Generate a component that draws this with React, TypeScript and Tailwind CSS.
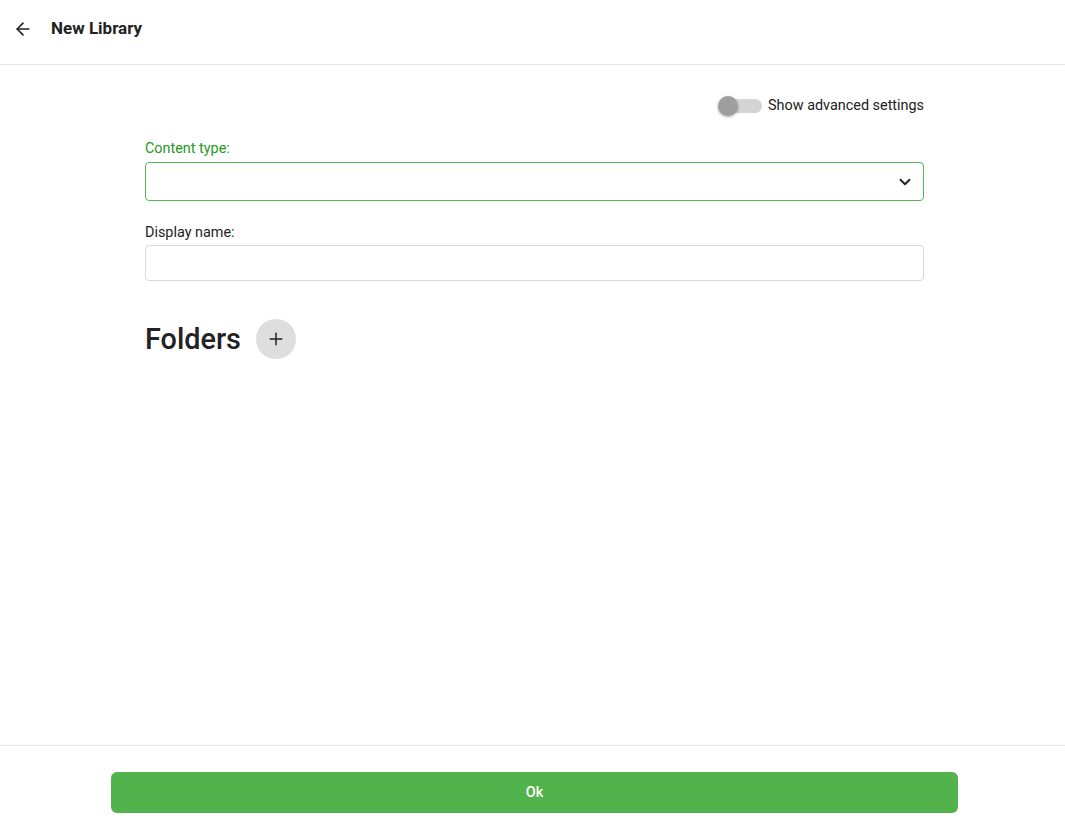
import { ChevronDown, ArrowLeft, Plus } from "lucide-react"

export default function App() {
  return (
    <div className="flex h-[833px] w-full flex-col bg-white text-[#222] font-['Roboto',sans-serif]">
      <header className="flex h-[65px] shrink-0 items-center border-b border-[#e6e6e6] pb-[7px] pl-[13px]">
        <ArrowLeft size={20} strokeWidth={2} className="text-[#222]" />
        <h1 className="ml-[18px] text-[17px] font-bold text-[#222]">New Library</h1>
      </header>

      <main className="flex-1">
        <div className="ml-[145px] w-[779px]">
          <div className="mt-[31px] flex h-5 items-center justify-end">
            <div className="relative h-5 w-[44px]">
              <div className="absolute left-[4px] top-[3px] h-[14px] w-[40px] rounded-full bg-[#d4d4d4]" />
              <div className="absolute left-0 top-0 h-5 w-5 rounded-full bg-[#9e9e9e] shadow-[0_1px_3px_rgba(0,0,0,0.35)]" />
            </div>
            <span className="ml-[6px] text-[14.4px] leading-5 text-[#222]">Show advanced settings</span>
          </div>

          <label className="mt-[23px] block text-[14.4px] leading-5 text-[#1e9a1e]">Content type:</label>
          <div className="mt-[3px] flex h-[39px] items-center justify-end rounded-[4px] border border-[#55b655] pr-[9px]">
            <ChevronDown size={18} strokeWidth={2.5} className="text-[#222]" />
          </div>

          <label className="mt-[22px] block text-[14.4px] leading-5 text-[#222]">Display name:</label>
          <div className="mt-[2px] h-[36px] rounded-[4px] border border-[#d9d9d9]" />

          <div className="mt-[38px] flex items-center">
            <h2 className="text-[28.8px] font-medium leading-10 text-[#222]">Folders</h2>
            <button className="ml-[15px] flex h-10 w-10 items-center justify-center rounded-full bg-[#dedede]">
              <Plus size={20} strokeWidth={1.8} className="text-[#222]" />
            </button>
          </div>
        </div>
      </main>

      <footer className="shrink-0 border-t border-[#e6e6e6] pb-[20px] pt-[26px]">
        <button className="ml-[111px] flex h-[41px] w-[847px] items-center justify-center rounded-[6px] bg-[#52b34c] text-[14.4px] font-medium text-white">
          Ok
        </button>
      </footer>
    </div>
  )
}
